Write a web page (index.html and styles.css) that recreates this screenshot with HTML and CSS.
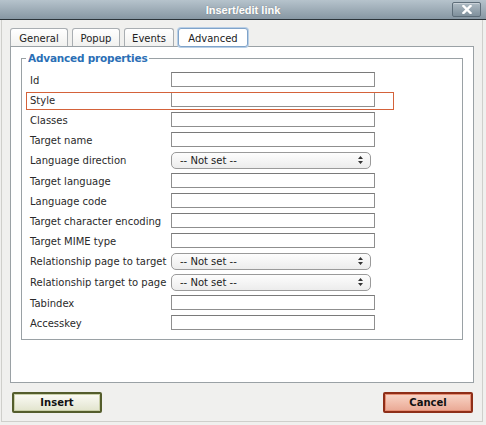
FILE: index.html
```html
<!DOCTYPE html>
<html>
<head>
<meta charset="utf-8">
<title>Insert/edit link</title>
<link rel="stylesheet" href="styles.css">
</head>
<body>
<div class="dialog">
  <div class="titlebar">
    <span></span>
    <span class="title">Insert/edit link</span>
    <button class="close" type="button" aria-label="Close">
      <svg width="10" height="9" viewBox="0 0 10 9"><path d="M1.5 1 L8.5 8 M8.5 1 L1.5 8" stroke="#fff" stroke-width="2.4" stroke-linecap="square"/></svg>
    </button>
  </div>
  <div class="body">
    <div class="tabs">
      <span class="tab t-general">General</span>
      <span class="tab t-popup">Popup</span>
      <span class="tab t-events">Events</span>
      <span class="tab t-advanced current">Advanced</span>
    </div>
    <div class="panel">
      <fieldset class="props">
        <legend>Advanced properties</legend>
        <div class="rows">
          <div class="row"><label>Id</label><input type="text"></div>
          <div class="row highlight"><label>Style</label><input type="text"></div>
          <div class="row"><label>Classes</label><input type="text"></div>
          <div class="row"><label>Target name</label><input type="text"></div>
          <div class="row srow"><label>Language direction</label><span class="select"><select><option>-- Not set --</option></select><svg class="arrows" width="5" height="8" viewBox="0 0 5 8"><path d="M2.5 0 L5 3 L0 3 Z M2.5 8 L5 5 L0 5 Z" fill="#333"/></svg></span></div>
          <div class="row"><label>Target language</label><input type="text"></div>
          <div class="row"><label>Language code</label><input type="text"></div>
          <div class="row"><label>Target character encoding</label><input type="text"></div>
          <div class="row"><label>Target MIME type</label><input type="text"></div>
          <div class="row srow"><label>Relationship page to target</label><span class="select"><select><option>-- Not set --</option></select><svg class="arrows" width="5" height="8" viewBox="0 0 5 8"><path d="M2.5 0 L5 3 L0 3 Z M2.5 8 L5 5 L0 5 Z" fill="#333"/></svg></span></div>
          <div class="row srow"><label>Relationship target to page</label><span class="select"><select><option>-- Not set --</option></select><svg class="arrows" width="5" height="8" viewBox="0 0 5 8"><path d="M2.5 0 L5 3 L0 3 Z M2.5 8 L5 5 L0 5 Z" fill="#333"/></svg></span></div>
          <div class="row"><label>Tabindex</label><input type="text"></div>
          <div class="row"><label>Accesskey</label><input type="text"></div>
        </div>
      </fieldset>
    </div>
    <div class="footer">
      <button class="btn insert" type="button">Insert</button>
      <button class="btn cancel" type="button">Cancel</button>
    </div>
  </div>
</div>
</body>
</html>
```

FILE: styles.css
```css
html, body {
  margin: 0;
  padding: 0;
  background: #f0f0ee;
}
body {
  font-family: "DejaVu Sans", Verdana, sans-serif;
  font-size: 10px;
  color: #000;
}
.dialog {
  width: 486px;
  height: 425px;
  overflow: hidden;
}
.titlebar {
  height: 19px;
  border-bottom: 1px solid #2c343a;
  background: linear-gradient(#b6c3cc, #8797a3);
  display: grid;
  grid-template-columns: 1fr auto 1fr;
  align-items: center;
}
.title {
  font-family: "Liberation Sans", Arial, sans-serif;
  font-weight: bold;
  font-size: 11px;
  color: #fff;
  text-shadow: 0 0 1px rgba(40, 50, 60, 0.7), 0 0 0 #fff;
  padding-top: 1px;
}
.close {
  justify-self: end;
  margin-right: 5px;
  width: 29px;
  height: 15px;
  padding: 0;
  border: 1px solid #5e6e7a;
  border-radius: 2px;
  background: linear-gradient(#aebbc4, #7f909c);
  display: flex;
  align-items: center;
  justify-content: center;
  box-shadow: inset 0 1px 0 rgba(255,255,255,0.35);
}
.body {
  box-sizing: border-box;
  width: 482px;
  margin-left: 1px;
  height: 402px;
  border-left: 1px solid #cfcfcb;
  border-right: 1px solid #cfcfcb;
  border-bottom: 1px solid #cfcfcb;
  padding-top: 8px;
}
.tabs {
  display: flex;
  margin-left: 8px;
  height: 18px;
  align-items: flex-end;
}
.tab {
  box-sizing: border-box;
  height: 18px;
  line-height: 19px;
  border: 1px solid #a9aeb2;
  border-bottom: none;
  border-radius: 3px 3px 0 0;
  background: linear-gradient(#ffffff, #f1f1ef);
  color: #222;
  text-align: center;
  margin-right: 4px;
}
.t-general { width: 58px; }
.t-popup { width: 48px; }
.t-events { width: 50px; margin-right: 4px; }
.t-advanced {
  width: 70px;
  height: 19px;
  line-height: 19px;
  background: #fff;
  border: 1px solid #7fa3c9;
  box-shadow: 0 0 0 1px #b9cfe6;
  border-radius: 3px;
  position: relative;
  z-index: 1;
  margin-bottom: -1px;
}
.panel {
  box-sizing: border-box;
  width: 464px;
  height: 337px;
  margin-left: 8px;
  border: 1px solid #9aa1a5;
  background: #fff;
  padding-top: 5px;
}
.props {
  box-sizing: border-box;
  width: 442px;
  margin: 0 0 0 10px;
  border: 1px solid #9aa1a5;
  padding: 7px 0 6px 4px;
}
.props legend {
  font-weight: bold;
  font-size: 10.5px;
  line-height: 13px;
  color: #2b6fb6;
  padding: 0 2px;
  margin-left: 0;
  letter-spacing: -0.2px;
}
.rows {
  display: flex;
  flex-direction: column;
  gap: 2px;
}
.row {
  width: 368px;
  height: 18px;
  display: flex;
  align-items: flex-start;
  position: relative;
}
.row.srow {
  height: 19px;
}
.row.highlight::after {
  content: "";
  position: absolute;
  left: 0;
  top: 0;
  right: 0;
  bottom: 0;
  border: 1px solid #d4623a;
  pointer-events: none;
}
.row label {
  width: 141px;
  padding-left: 4px;
  line-height: 15px;
  padding-top: 1px;
  color: #2a2a2a;
  white-space: nowrap;
}
.row input {
  box-sizing: border-box;
  width: 204px;
  height: 15px;
  margin: 0;
  padding: 0 2px;
  border: 1px solid #8f8f8f;
  border-top-color: #7a7a7a;
  background: #fff;
  font: inherit;
}
.select {
  position: relative;
  display: block;
  width: 200px;
  height: 17px;
}
.select select {
  appearance: none;
  -webkit-appearance: none;
  box-sizing: border-box;
  width: 200px;
  height: 17px;
  margin: 0;
  padding: 0 0 0 8px;
  border: 1px solid #9a9a9a;
  border-radius: 5px;
  background: linear-gradient(#fdfdfd, #ececec);
  font-family: "DejaVu Sans", Verdana, sans-serif;
  font-size: 10px;
  line-height: 15px;
  color: #222;
}
.select .arrows {
  position: absolute;
  right: 8px;
  top: 4px;
  pointer-events: none;
}
.footer {
  display: flex;
  justify-content: space-between;
  padding: 0 9px 0 10px;
  margin-top: 9px;
}
.btn {
  box-sizing: border-box;
  width: 90px;
  height: 21px;
  margin: 0;
  padding: 0;
  font-family: "DejaVu Sans", Verdana, sans-serif;
  font-weight: bold;
  font-size: 10px;
  color: #111;
  border-radius: 2px;
}
.insert {
  border: 2px solid #545d2c;
  background: linear-gradient(#fbfbf4, #ecedde 60%, #e2e4cc);
  box-shadow: inset 0 0 0 1px #c9cfa8;
}
.cancel {
  border: 2px solid #8e2e18;
  background: linear-gradient(#f8d6c8, #f0baa8 60%, #e9a894);
  box-shadow: inset 0 0 0 1px #e58e74;
}
```
